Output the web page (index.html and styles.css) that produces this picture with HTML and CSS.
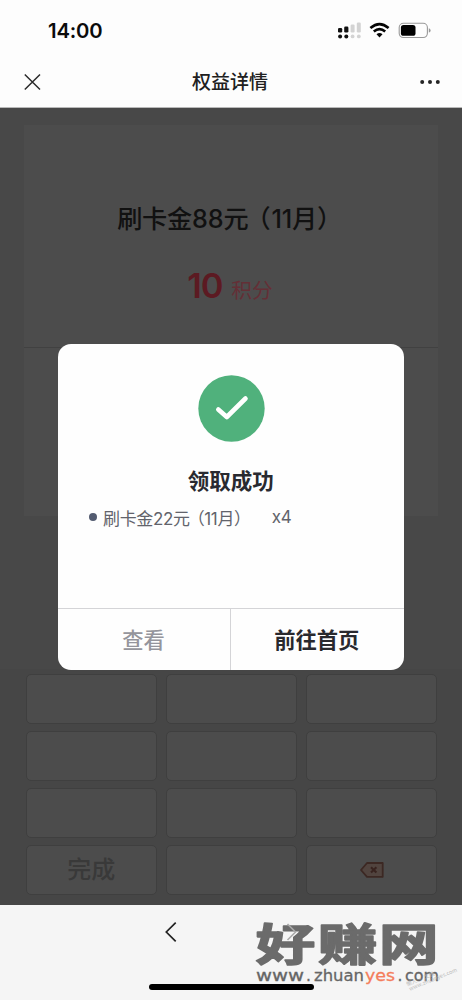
FILE: index.html
```html
<!DOCTYPE html>
<html lang="zh-CN">
<head>
<meta charset="utf-8">
<title>权益详情</title>
<link rel="stylesheet" href="styles.css">
</head>
<body>
<div class="phone">
  <header class="top">
    <div class="status">
      <span class="time">14:00</span>
      <svg class="status-icons" width="96" height="20" viewBox="0 0 96 20">
        <g fill="#111"><rect x="1" y="8" width="4.2" height="4.5" rx="1.3"/><rect x="7.2" y="6.5" width="4.2" height="6" rx="1.3"/><circle cx="3.1" cy="16.4" r="2"/><circle cx="9.3" cy="16.4" r="2"/></g>
        <g fill="#d3d3d3"><rect x="13.6" y="4.5" width="4" height="8" rx="1.3"/><rect x="19.8" y="2.4" width="4" height="10.1" rx="1.3"/><circle cx="15.6" cy="16.4" r="1.9"/><circle cx="21.8" cy="16.4" r="1.9"/></g>
        <g fill="none" stroke="#050505" stroke-width="2.6"><path d="M33.4 8Q42.5 .2 51.6 8"/><path d="M36.8 11.6Q42.5 6.8 48.2 11.6"/></g>
        <path fill="#050505" d="M39.5 14.2Q42.5 12 45.5 14.2L42.5 17.5Z"/>
        <rect x="62.2" y="3.3" width="28.2" height="14.2" rx="4.2" fill="none" stroke="#999" stroke-width="1.1"/>
        <rect x="63.9" y="5" width="14.6" height="10.8" rx="2.6" fill="#000"/>
        <path fill="#999" d="M91.8 8.2Q93.6 8.6 93.6 10.4T91.8 12.6Z"/>
      </svg>
    </div>
    <nav class="nav">
      <svg width="18" height="18" viewBox="0 0 18 18"><path d="M1.8 1.5L17 16.5M17 1.5L1.8 16.5" fill="none" stroke="#2b2b2b" stroke-width="1.5"/></svg>
      <h1>权益详情</h1>
      <svg width="22" height="6" viewBox="0 0 22 6" fill="#252525"><circle cx="3.2" cy="3" r="2"/><circle cx="11" cy="3" r="2"/><circle cx="18.8" cy="3" r="2"/></svg>
    </nav>
  </header>

  <main class="page">
    <section class="card">
      <div class="benefit">
        <h2>刷卡金88元<span class="paren">（</span>11月）</h2>
        <p class="points"><b>10</b><span>积分</span></p>
      </div>
    </section>
    <section class="keypad">
      <div class="key"></div><div class="key"></div><div class="key"></div>
      <div class="key"></div><div class="key"></div><div class="key"></div>
      <div class="key"></div><div class="key"></div><div class="key"></div>
      <div class="key">完成</div><div class="key"></div>
      <div class="key"><svg width="26" height="18" viewBox="0 0 26 18"><path d="M2 9L8 2H23.7V15.8H8Z" fill="#51443f" stroke="#3c2823" stroke-width="1.8" stroke-linejoin="round"/><path d="M12 6.2L17.4 11.6M17.4 6.2L12 11.6" stroke="#38231f" stroke-width="2.1"/></svg></div>
    </section>
    <section class="dialog">
      <div class="dialog-body">
        <svg class="check" width="67" height="67" viewBox="0 0 67 67"><circle cx="33.5" cy="33.5" r="33.2" fill="#50b17c"/><path d="M20.3 34.5L28.8 42L47.5 23.5" fill="none" stroke="#fff" stroke-width="4.6" stroke-linecap="round" stroke-linejoin="round"/></svg>
        <h3>领取成功</h3>
        <p class="reward"><i></i><span>刷卡金22元<span class="paren">（</span>11月）</span><span class="count">x4</span></p>
      </div>
      <div class="actions"><button>查看</button><button class="primary">前往首页</button></div>
    </section>
  </main>

  <footer class="bottom">
    <svg class="back" width="14" height="22" viewBox="0 0 14 22"><path d="M11.7 1.7L2.3 11L11.7 20.3" fill="none" stroke="#222" stroke-width="1.7"/></svg>
    <div class="home-bar"></div>
    <svg class="watermark" width="212" height="95" viewBox="250 905 212 95">
      <g class="brand">
        <text transform="translate(255.8 960.5) scale(1.19 .88)">好</text>
        <text transform="translate(318 960.5) scale(1.19 .88)">赚</text>
        <text transform="translate(379 960.5) scale(1.19 .88)">网</text>
      </g>
      <path d="M287.5 924L295.5 932L287.5 940" fill="none" stroke="#a9a9a9" stroke-width="1.6"/>
      <g class="site">
        <text x="256" y="981" textLength="48" lengthAdjust="spacingAndGlyphs">www</text>
        <text x="306" y="981">.</text>
        <text x="314" y="981" textLength="50" lengthAdjust="spacingAndGlyphs">zhuan</text>
        <text class="yes" x="365" y="981" textLength="30" lengthAdjust="spacingAndGlyphs">yes</text>
        <text x="397.5" y="981">.</text>
        <text x="405" y="981" textLength="34" lengthAdjust="spacingAndGlyphs">com</text>
      </g>
      <g class="stamp" transform="translate(409 991) rotate(-22)"><text x="0" y="-5">懒人 · 文档</text><text x="1" y="0">www.zhuanyes.com</text></g>
    </svg>
  </footer>
</div>
</body>
</html>
```
FILE: styles.css
```css
* { box-sizing: border-box; }
body, h1, h2, h3, p { margin: 0; }
body { font-family: Inter, "Noto Sans CJK SC", sans-serif; }
svg { display: block; }

.phone { width: 462px; height: 1000px; overflow: hidden; display: flex; flex-direction: column; background: #fdfdfd; }

.top { height: 108px; flex: none; border-bottom: 1px solid #b9b9b9; }
.status { height: 56px; padding: 20px 29px 0 48px; display: flex; justify-content: space-between; align-items: flex-start; }
.time { font-size: 20.3px; line-height: 22px; font-weight: 600; letter-spacing: -.2px; color: #0b0b0b; }
.nav { height: 52px; padding: 0 21px 0 23px; display: flex; justify-content: space-between; align-items: center; }
.nav h1 { padding-top: 2px; font-size: 19px; line-height: 28px; font-weight: 500; color: #202020; }

.page { position: relative; height: 797px; flex: none; background: #484848; display: flex; flex-direction: column; justify-content: space-between; }
.card { margin: 17px 24px 0; height: 391px; background: #4c4c4c; }
.benefit { height: 223px; padding-top: 74px; text-align: center; border-bottom: 1px solid #414141; }
.benefit h2 { padding-right: 3px; font-size: 25.2px; line-height: 40px; font-weight: 500; letter-spacing: -.2px; color: #111; white-space: nowrap; }
.benefit .paren { margin-left: -3px; margin-right: 1px; }
.points { margin-top: 24px; height: 46px; display: flex; justify-content: center; align-items: baseline; gap: 9px; margin-left: -2px; color: #5c1a22; }
.points b { font-size: 34.5px; line-height: 46px; font-weight: 600; letter-spacing: -1.2px; }
.points span { font-size: 20.7px; line-height: 30px; color: #642f36; }

.keypad { height: 236px; padding: 5px 24.5px 11px 25.5px; display: grid; grid-template-columns: repeat(3, 1fr); grid-auto-rows: 50px; column-gap: 9px; row-gap: 7px; background: #464646; }
.key { display: flex; align-items: center; justify-content: center; border: 1px solid #3f3f3f; border-radius: 5px; background: #4c4c4c; color: #393939; font-size: 24px; font-weight: 500; line-height: 30px; }

.dialog { position: absolute; left: 58px; top: 235.5px; width: 345.5px; height: 326px; border-radius: 13px; background: #fefefe; overflow: hidden; display: flex; flex-direction: column; }
.dialog-body { height: 264.5px; padding-top: 31.5px; display: flex; flex-direction: column; align-items: center; }
.check { margin-left: 2px; }
.dialog h3 { margin-top: 23px; font-size: 21.5px; line-height: 32px; font-weight: 700; color: #292a30; }
.reward { align-self: stretch; margin-top: 8px; padding-left: 31px; height: 24px; display: flex; align-items: center; font-size: 17px; letter-spacing: -.35px; color: #62636b; white-space: nowrap; }
.reward i { width: 8px; height: 8px; margin-right: 6px; border-radius: 50%; background: #535b70; }
.reward .paren { margin-left: -2px; }
.count { margin-left: 21px; }
.actions { flex: 1; display: grid; grid-template-columns: 172px 1fr; border-top: 1px solid #d4d4d7; }
.actions button { padding: 2px 1px 0 0; border: 0; background: none; font: 500 21.3px/32px Inter, "Noto Sans CJK SC", sans-serif; color: #95959c; }
.actions .primary { border-left: 1px solid #d4d4d7; font-weight: 700; color: #29292e; }

.bottom { position: relative; height: 95px; flex: none; background: #f5f5f5; display: flex; flex-direction: column; justify-content: space-between; align-items: center; padding-bottom: 10px; }
.back { align-self: flex-start; margin: 16px 0 0 164px; }
.home-bar { width: 165px; height: 6px; border-radius: 3px; background: #000; }
.watermark { position: absolute; left: 250px; top: 0; }
.brand { font: 700 50px "Noto Sans CJK SC", sans-serif; fill: #6b6b6b; stroke: #6b6b6b; stroke-width: 1.8px; stroke-linejoin: round; }
.site { font: 500 15.5px "DejaVu Sans", sans-serif; fill: #666; stroke: #666; stroke-width: .3px; }
.site .yes { fill: #f47d5b; stroke: #f47d5b; }
.stamp { font: 5.5px "Noto Sans CJK SC", sans-serif; fill: #bdbdbd; }
```
